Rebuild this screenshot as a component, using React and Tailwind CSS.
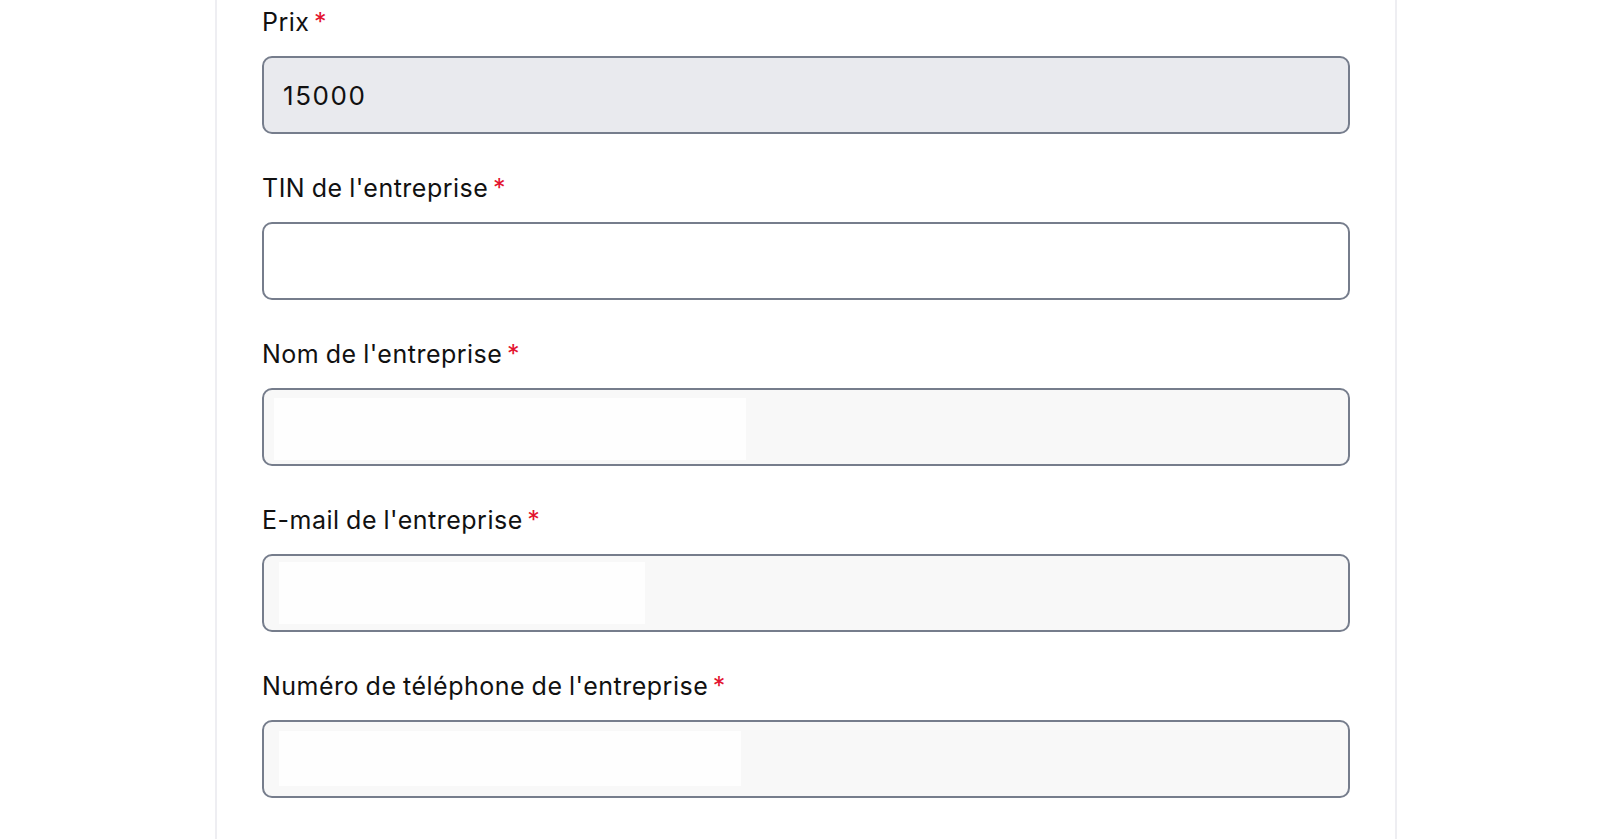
import React from 'react';

const fields = [
    { label: 'Prix', value: '15000', bg: 'bg-[#e9eaee]' },
    { label: "TIN de l'entreprise", bg: 'bg-white' },
    { label: "Nom de l'entreprise", bg: 'bg-[#f8f8f8]', pad: 'pl-[10px] pt-[8px]', inner: 'w-[472px] h-[62px]' },
    { label: "E-mail de l'entreprise", bg: 'bg-[#f8f8f8]', pad: 'pl-[15px] pt-[6px]', inner: 'w-[366px] h-[62px]' },
    { label: "Numéro de téléphone de l'entreprise", bg: 'bg-[#f8f8f8]', pad: 'pl-[15px] pt-[9px]', inner: 'w-[462px] h-[55px]' },
];

const Field = ({ field }) => (
    <div className="flex flex-col">
        <label className="text-[25px] leading-[32px] tracking-[0.5px] [word-spacing:-1px] text-[#111111] mb-[18px]">
            {field.label} <span className="ml-[-2px] text-[#e3132f]">*</span>
        </label>
        {field.inner ? (
            <div className={`h-[78px] rounded-[10px] border-2 border-[#767d8c] flex items-start ${field.bg} ${field.pad}`}>
                <div className={`bg-[#fefefe] ${field.inner}`}></div>
            </div>
        ) : (
            <div className={`h-[78px] rounded-[10px] border-2 border-[#767d8c] flex items-center px-[19px] ${field.bg}`}>
                <span className="text-[26px] tracking-[1.6px] text-[#111111]">{field.value}</span>
            </div>
        )}
    </div>
);

export default function App() {
    return (
        <div className="min-h-screen bg-white" style={{ fontFamily: 'Inter, "Noto Sans", sans-serif' }}>
            <div className="ml-[215px] w-[1182px] min-h-[839px] border-x-2 border-[#eeeef2] px-[45px] pt-[6px] pb-10">
                <div className="flex flex-col gap-[38px]">
                    {fields.map(f => <Field key={f.label} field={f} />)}
                </div>
            </div>
        </div>
    );
}
